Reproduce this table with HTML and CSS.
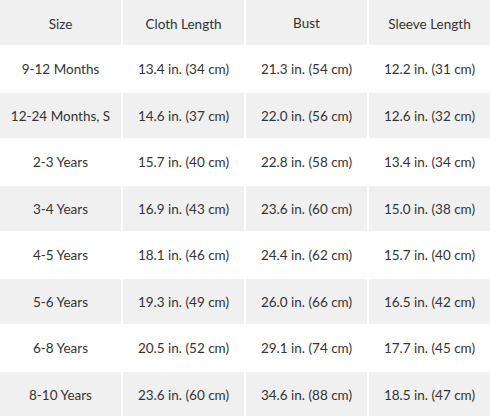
FILE: index.html
```html
<!DOCTYPE html>
<html>
<head>
<meta charset="utf-8">
<link rel="stylesheet" href="styles.css">
</head>
<body>
<div class="table">
  <div class="row shade head"><div class="cell">Size</div><div class="cell">Cloth Length</div><div class="cell bust">Bust</div><div class="cell">Sleeve Length</div></div>
  <div class="row"><div class="cell">9-12 Months</div><div class="cell">13.4 in. (34 cm)</div><div class="cell">21.3 in. (54 cm)</div><div class="cell">12.2 in. (31 cm)</div></div>
  <div class="row shade"><div class="cell">12-24 Months, S</div><div class="cell">14.6 in. (37 cm)</div><div class="cell">22.0 in. (56 cm)</div><div class="cell">12.6 in. (32 cm)</div></div>
  <div class="row"><div class="cell">2-3 Years</div><div class="cell">15.7 in. (40 cm)</div><div class="cell">22.8 in. (58 cm)</div><div class="cell">13.4 in. (34 cm)</div></div>
  <div class="row shade"><div class="cell">3-4 Years</div><div class="cell">16.9 in. (43 cm)</div><div class="cell">23.6 in. (60 cm)</div><div class="cell">15.0 in. (38 cm)</div></div>
  <div class="row"><div class="cell">4-5 Years</div><div class="cell">18.1 in. (46 cm)</div><div class="cell">24.4 in. (62 cm)</div><div class="cell">15.7 in. (40 cm)</div></div>
  <div class="row shade"><div class="cell">5-6 Years</div><div class="cell">19.3 in. (49 cm)</div><div class="cell">26.0 in. (66 cm)</div><div class="cell">16.5 in. (42 cm)</div></div>
  <div class="row"><div class="cell">6-8 Years</div><div class="cell">20.5 in. (52 cm)</div><div class="cell">29.1 in. (74 cm)</div><div class="cell">17.7 in. (45 cm)</div></div>
  <div class="row shade"><div class="cell">8-10 Years</div><div class="cell">23.6 in. (60 cm)</div><div class="cell">34.6 in. (88 cm)</div><div class="cell">18.5 in. (47 cm)</div></div>
</div>
</body>
</html>
```
FILE: styles.css
```css
html, body {
  margin: 0;
  padding: 0;
  background: #fff;
}
body {
  font-family: Lato, "Open Sans", sans-serif;
  font-size: 13.5px;
  color: #333;
}
.table {
  display: flex;
  flex-direction: column;
  gap: 1.5px;
  width: 490px;
}
.row {
  display: grid;
  grid-template-columns: repeat(4, 1fr);
  column-gap: 2px;
  height: 45px;
  flex: none;
}
.cell {
  display: flex;
  align-items: center;
  justify-content: center;
  padding-top: 0;
  white-space: nowrap;
}
.head .cell {
  padding-top: 3px;
}
.head .bust {
  padding-top: 0;
}
.shade .cell {
  background: #f0f0f0;
}
```
